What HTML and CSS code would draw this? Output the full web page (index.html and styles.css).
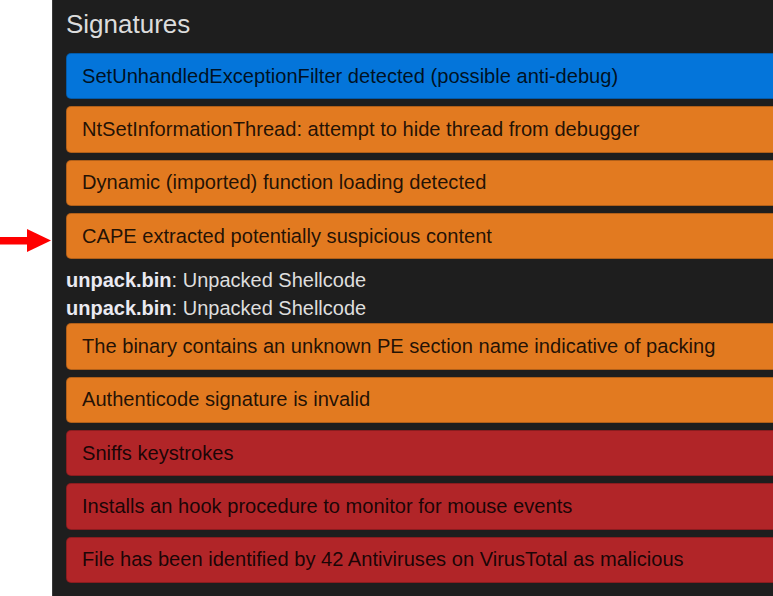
FILE: index.html
```html
<!DOCTYPE html>
<html lang="en">
<head>
<meta charset="utf-8">
<title>Signatures</title>
<link rel="stylesheet" href="styles.css">
</head>
<body>
<div class="page">
  <div class="gutter">
    <svg class="arrow" width="52" height="26" viewBox="0 0 52 26" aria-hidden="true">
      <rect x="0" y="8" width="28" height="7.5" fill="#ff0000"/>
      <polygon points="27,0 51,11.5 27,23" fill="#ff0000"/>
    </svg>
  </div>
  <main class="panel">
    <h2 class="title">Signatures</h2>
    <div class="sig sig-info">SetUnhandledExceptionFilter detected (possible anti-debug)</div>
    <div class="sig sig-warn">NtSetInformationThread: attempt to hide thread from debugger</div>
    <div class="sig sig-warn">Dynamic (imported) function loading detected</div>
    <div class="sig sig-warn">CAPE extracted potentially suspicious content</div>
    <div class="details">
      <div class="detail"><b>unpack.bin</b>: Unpacked Shellcode</div>
      <div class="detail"><b>unpack.bin</b>: Unpacked Shellcode</div>
    </div>
    <div class="sig sig-warn">The binary contains an unknown PE section name indicative of packing</div>
    <div class="sig sig-warn">Authenticode signature is invalid</div>
    <div class="sig sig-danger">Sniffs keystrokes</div>
    <div class="sig sig-danger">Installs an hook procedure to monitor for mouse events</div>
    <div class="sig sig-danger">File has been identified by 42 Antiviruses on VirusTotal as malicious</div>
  </main>
</div>
</body>
</html>
```
FILE: styles.css
```css
html, body {
  margin: 0;
  padding: 0;
  background: #ffffff;
  overflow: hidden;
  height: 596px;
}

.page {
  display: flex;
  height: 596px;
  font-family: "Liberation Sans", Arial, sans-serif;
}

.gutter {
  position: relative;
  width: 52px;
  flex: 0 0 52px;
  background: #ffffff;
}

.arrow {
  position: absolute;
  left: 0;
  top: 229px;
}

.panel {
  flex: 0 0 900px;
  width: 900px;
  background: #1e1e1e;
  border-left: 1px solid #3a3a3a;
  padding: 0 0 0 13px;
  box-sizing: border-box;
}

.title {
  margin: 0 0 14px 0;
  padding-top: 9px;
  font-size: 26px;
  line-height: 30px;
  font-weight: normal;
  color: #dcdcdc;
}

.sig {
  display: flex;
  align-items: center;
  box-sizing: border-box;
  height: 46.33px;
  margin-bottom: 7px;
  padding: 0 15px;
  border: 1px solid rgba(0, 0, 0, 0.22);
  border-radius: 5px;
  font-size: 20.1px;
  color: rgba(0, 0, 0, 0.86);
  white-space: nowrap;
}

.sig-info {
  background: #0475da;
}

.sig-warn {
  background: #e27a20;
}

.sig-danger {
  background: #b12528;
}

.details {
  margin-bottom: 1px;
}

.detail {
  font-size: 20px;
  line-height: 28px;
  color: #dedede;
  white-space: nowrap;
}

.detail b {
  color: #eaeaf2;
}
```
